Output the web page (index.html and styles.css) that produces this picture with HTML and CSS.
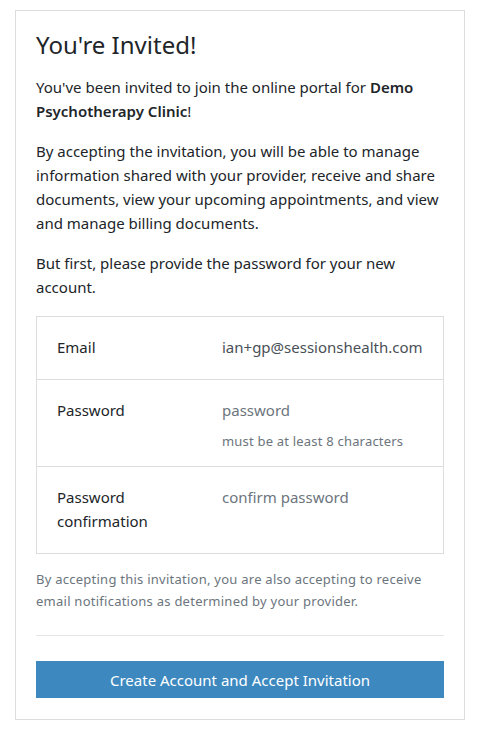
FILE: index.html
```html
<!DOCTYPE html>
<html>
<head>
<meta charset="utf-8">
<link rel="stylesheet" href="styles.css">
</head>
<body>
<div class="card">
  <h1 class="title">You're Invited!</h1>
  <p class="para">You've been invited to join the online portal for <strong>Demo Psychotherapy Clinic</strong>!</p>
  <p class="para">By accepting the invitation, you will be able to manage information shared with your provider, receive and share documents, view your upcoming appointments, and view and manage billing documents.</p>
  <p class="para last">But first, please provide the password for your new account.</p>
  <div class="form-table">
    <div class="row">
      <div class="label">Email</div>
      <div class="value email">ian+gp@sessionshealth.com</div>
    </div>
    <div class="row with-hint">
      <div class="label">Password</div>
      <div class="value">
        <div class="placeholder">password</div>
        <div class="hint">must be at least 8 characters</div>
      </div>
    </div>
    <div class="row">
      <div class="label">Password confirmation</div>
      <div class="value">
        <div class="placeholder">confirm password</div>
      </div>
    </div>
  </div>
  <p class="note">By accepting this invitation, you are also accepting to receive email notifications as determined by your provider.</p>
  <hr class="divider">
  <button class="btn">Create Account and Accept Invitation</button>
</div>
</body>
</html>
```
FILE: styles.css
```css
* { box-sizing: border-box; }
body {
  margin: 0;
  padding: 10px 15px 16px;
  background: #fff;
  font-family: "Noto Sans", "Open Sans", sans-serif;
  color: #212529;
  font-size: 15px;
  line-height: 24px;
}
.card {
  border: 1px solid #ddd;
  padding: 17px 20px 21px;
}
.title {
  margin: 0 0 13px;
  font-size: 24px;
  font-weight: 400;
  line-height: 34px;
}
.para {
  margin: 0 0 16px;
}
.para.last { margin-bottom: 17px; }
.para strong { font-weight: 600; }
.form-table {
  border: 1px solid #ddd;
}
.row {
  display: grid;
  grid-template-columns: 165px 1fr;
  padding: 18px 20px 20px;
  border-top: 1px solid #ddd;
}
.row.with-hint { padding-bottom: 16px; }
.row:first-child { border-top: none; }
.label { padding-right: 20px; }
.value.email { color: #495057; }
.placeholder { color: #6c757d; }
.hint {
  margin-top: 10px;
  font-size: 13px;
  line-height: 18px;
  letter-spacing: 0.2px;
  color: #6c757d;
}
.note {
  margin: 14px 0 0;
  font-size: 13px;
  line-height: 22px;
  letter-spacing: 0.25px;
  color: #6c757d;
}
.divider {
  margin: 23px 0 25px;
  border: 0;
  border-top: 1px solid #e5e5e5;
}
.btn {
  display: block;
  width: 100%;
  height: 37px;
  border: 0;
  background: #3d89bf;
  color: #fff;
  font-family: inherit;
  font-size: 15px;
  cursor: pointer;
}
```
